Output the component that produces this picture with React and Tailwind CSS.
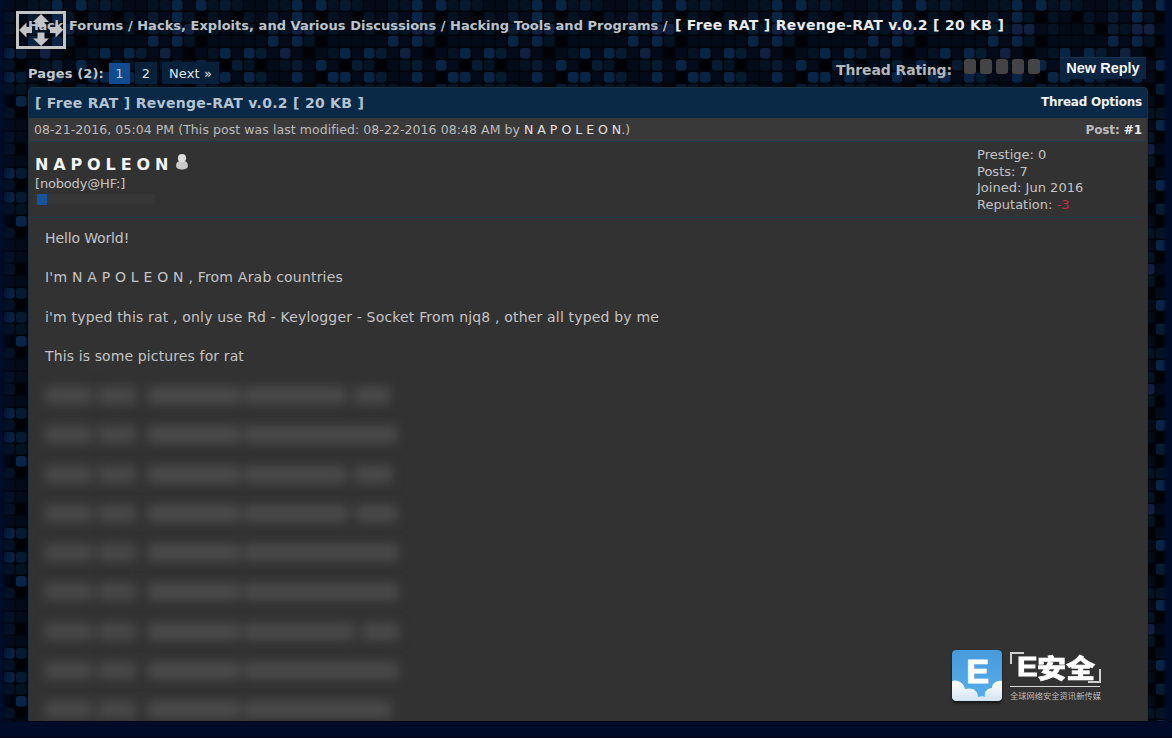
const TONES = {
  ".": "#020b17",
  "-": "#041322",
  "o": "#061b30",
  "#": "#092545",
  "p": "#11203f",
  "x": "#010205",
};

// One 10 x 10 block of the mosaic, repeated over the page
const MOSAIC = [
  "..--#.#-o-",
  "-.o.#-x-.x",
  "-xo-pp.-..",
  "..#.#-x...",
  "#o.p.x.-#.",
  "-x.-o.#.xo",
  "#o..#.x##.",
  "---..xo-.-",
  "x#.-o.x.#.",
  "-x-.#--x.-",
];

const BLURRED = [
  [345, 100, 30],
  [352, 140, 0],
  [347, 100, 36],
  [352, 102, 30],
  [353, 140, 0],
  [353, 140, 0],
  [354, 108, 32],
  [353, 140, 0],
  [346, 130, 0],
];

function Mosaic() {
  return (
    <svg className="absolute inset-0 h-full w-full" aria-hidden="true">
      <defs>
        <pattern id="mosaic" x="3" y="-1" width="120" height="120" patternUnits="userSpaceOnUse">
          <rect width="120" height="120" fill="#01060e" />
          {MOSAIC.map((row, r) =>
            [...row].map((t, c) => (
              <rect key={`${r}-${c}`} x={c * 12 + 1} y={r * 12 + 1} width="10.4" height="10.4" rx="2.4" fill={TONES[t]} />
            ))
          )}
        </pattern>
        <linearGradient id="edgeL" x1="0" x2="1" y1="0" y2="0">
          <stop offset="0" stopColor="#000c2e" />
          <stop offset="0.3" stopColor="#000c2a" stopOpacity="0.6" />
          <stop offset="1" stopColor="#000c2a" stopOpacity="0" />
        </linearGradient>
        <linearGradient id="edgeR" x1="1" x2="0" y1="0" y2="0">
          <stop offset="0" stopColor="#000b28" />
          <stop offset="0.4" stopColor="#000b28" stopOpacity="0.95" />
          <stop offset="0.7" stopColor="#000b28" stopOpacity="0" />
        </linearGradient>
      </defs>
      <rect width="1172" height="738" fill="url(#mosaic)" />
      <rect width="14" height="738" fill="url(#edgeL)" />
      <rect x="1158" width="14" height="738" fill="url(#edgeR)" />
    </svg>
  );
}

function MoveHandle() {
  return (
    <svg className="absolute left-4 top-[11px]" width="50" height="38" viewBox="0 0 50 38" aria-hidden="true">
      <rect x="1.5" y="1.5" width="47" height="35" fill="none" stroke="#c2c4c6" strokeWidth="3" />
      <g fill="#c2c4c6">
        <path d="M25 3 L33 11 H28.5 V16 H21.5 V11 H17 Z" />
        <path d="M25 35 L33 27.500 H28.500 V21.500 H21.500 V27.500 H17 Z" />
        <path d="M3 19 L10.500 11.500 V16 H16 V22 H10.500 V26.500 Z" />
        <path d="M47 19 L39.500 11.500 V16 H34 V22 H39.500 V26.500 Z" />
      </g>
    </svg>
  );
}

function UserIcon() {
  return (
    <svg className="ml-[6px] -mt-[4px]" width="14" height="18" viewBox="0 0 14 18" aria-hidden="true">
      <path d="M1.200 13.500 C0.800 9.500 3 7.800 7 7.800 S13.200 9.500 12.800 13.500 C12.800 17.500 1.200 17.500 1.200 13.500 Z" fill="#c9c9c9" />
      <circle cx="7" cy="5.200" r="4.100" fill="#dcdcdc" />
    </svg>
  );
}

function Watermark() {
  return (
    <div className="absolute left-[952px] top-[650px] flex gap-[8px]">
      <svg width="50" height="51" viewBox="0 0 50 51" className="shadow-[0_2px_3px_rgba(0,0,0,0.6)] rounded-[4px]" aria-hidden="true">
        <defs>
          <clipPath id="badge"><rect width="50" height="51" rx="4" /></clipPath>
          <linearGradient id="sky" x1="0" y1="0" x2="0" y2="1">
            <stop offset="0" stopColor="#479bdc" />
            <stop offset="1" stopColor="#58aeea" />
          </linearGradient>
          <linearGradient id="cloud" x1="0" y1="0" x2="0" y2="1">
            <stop offset="0" stopColor="#ffffff" />
            <stop offset="1" stopColor="#d3e4f1" />
          </linearGradient>
        </defs>
        <g clipPath="url(#badge)">
          <rect width="50" height="51" fill="url(#sky)" />
          <path d="M0 31 C6 29 12 33 13 39 C20 37 26 40 26 47 C29 46 32 46 33 47 C32 42 35 38 40 38 C40 33 45 30 50 31 V51 H0 Z" fill="url(#cloud)" />
        </g>
        <text x="25.500" y="33" textAnchor="middle" fontFamily="Liberation Sans" fontWeight="700" fontSize="34" fill="#fff" stroke="#fff" strokeWidth="1">E</text>
      </svg>
      <div className="relative flex w-[91px] flex-col text-white">
        <div className="flex h-[34px] items-center whitespace-nowrap pl-[7px] font-['Noto_Sans_CJK_SC',sans-serif] font-black">
          <span className="w-[20px] origin-left scale-x-110 font-['Liberation_Sans',sans-serif] text-[28px] leading-[34px] [-webkit-text-stroke:1px_white]">E</span>
          <span className="origin-left scale-x-[1.12] text-[26px] leading-[34px] [-webkit-text-stroke:0.6px_white]">安全</span>
        </div>
        <span className="absolute left-0 top-[2px] h-[12px] w-[14px] border-l-2 border-t-2 border-[#d0d0d0]" />
        <span className="absolute right-0 top-[19px] h-[14px] w-[13px] border-b-2 border-r-2 border-[#d0d0d0]" />
        <div className="mt-[2px] h-px w-[90px] bg-[#d8d8d8]" />
        <div className="mt-[2px] whitespace-nowrap font-['Noto_Sans_CJK_SC',sans-serif] text-[8.27px] leading-[13px] text-[#bdbdbd]">全球网络安全资讯新传媒</div>
      </div>
    </div>
  );
}

function BlurLine({ width, tail, dot }) {
  return (
    <div className="flex h-[39.25px] items-center blur-[5.5px]">
      <span className="h-[17px] w-[47px] bg-[#4a494a]" />
      <span className="ml-[6px] h-[17px] w-[38px] bg-[#4a494a]" />
      <span className="ml-[12px] h-[17px] w-[92px] bg-[#4c4b4c]" />
      <span className="ml-[4px] h-[17px] bg-[#4b4a4b]" style={{ width: dot ? tail + 2 : width - 199 }} />
      {dot > 0 && <span className="ml-[8px] h-[17px] bg-[#4b4a4b]" style={{ width: width - 209 - tail }} />}
    </div>
  );
}

export default function App() {
  return (
    <div className="relative flex h-[738px] w-[1172px] flex-col overflow-hidden bg-[#01060e] font-['DejaVu_Sans','Noto_Sans_CJK_SC',sans-serif] text-[#c4c4c4]">
      <Mosaic />

      <div className="relative flex h-[50px] items-center whitespace-pre pl-7 pt-px text-[13px] font-bold tracking-[0.02px] text-[#bcc3ca]">
        <span className="w-[41px] tracking-[-0.3px]">Hack </span>
        <span className="w-[606px]">Forums / Hacks, Exploits, and Various Discussions / Hacking Tools and Programs / </span>
        <span className="text-[14px] tracking-[0.29px] text-[#e8ecef]">[ Free RAT ] Revenge-RAT v.0.2 [ 20 KB ]</span>
        <MoveHandle />
      </div>

      <div className="relative flex h-[37px] items-start justify-between pl-7 pr-[26px]">
        <div className="flex items-center pt-[12px] text-[13px] text-[#dfe5ea]">
          <span className="w-[81px] whitespace-nowrap pt-[2px] font-bold tracking-[0.15px] text-[#c3c7cb]">Pages (2):</span>
          <span className="flex h-[21px] w-[21px] items-center justify-center bg-[#114c91] pt-px text-[#b9cfe6]">1</span>
          <span className="ml-[5px] flex h-[22px] w-[22px] items-center justify-center bg-[#08213a] pt-px">2</span>
          <span className="ml-[5px] flex h-[22px] w-[57px] items-center justify-center bg-[#08213a] pt-px tracking-[0.1px]">Next »</span>
        </div>
        <div className="flex pt-[7px]">
          <span className="mt-[4px] w-[128px] whitespace-nowrap text-[14px] font-bold leading-[18px] tracking-[-0.11px] text-[#b4b7ba]">Thread Rating:</span>
          <div className="mt-[2px] flex gap-[4px]">
            {[0, 1, 2, 3, 4].map((i) => (
              <span key={i} className="h-[15px] w-[12px] rounded-[3px] bg-[#444445]" />
            ))}
          </div>
          <span className="ml-[20px] flex h-[22px] w-[86px] items-center justify-center whitespace-nowrap border-t border-[#15324f] bg-[#0a2442] font-['Liberation_Sans',sans-serif] text-[14.5px] font-bold text-[#f2f4f6]">New Reply</span>
        </div>
      </div>

      <main className="relative ml-7 flex h-[634px] w-[1120px] flex-col rounded-t-[5px] border-x border-t border-[#1d3240] bg-[#333233] pr-px">
        <header className="-mr-px flex h-[30px] items-center justify-between rounded-t-[4px] bg-[#092947] pl-[6px] pr-[5px] font-bold">
          <h1 className="text-[14px] tracking-[0.29px] text-[#b4c3d1]">[ Free RAT ] Revenge-RAT v.0.2 [ 20 KB ]</h1>
          <span className="-mt-[3px] text-[12px] tracking-[-0.23px] text-[#edf1f4]">Thread Options</span>
        </header>

        <div className="flex h-[24px] items-center justify-between whitespace-pre border-b border-[#1f3c44] bg-[#3a393a] pl-[5px] pr-[4px] text-[12.500px] text-[#bcbcbc]">
          <span className="pt-px tracking-[0.064px]">
            08-21-2016, 05:04 PM (This post was last modified: 08-22-2016 08:48 AM by <span className="tracking-normal text-[#e2e2e2]">N A P O L E O N</span>.)
          </span>
          <span className="text-[12px] font-bold tracking-[-0.1px]">Post: <span className="text-[#ececec]">#1</span></span>
        </div>

        <div className="flex h-[76px] justify-between border-b border-[#1f3c44] pl-[6px]">
          <div className="flex flex-col pt-[10px]">
            <div className="flex h-[23px] items-center">
              <span className="w-[134px] whitespace-nowrap pt-px text-[16px] font-bold leading-[23px] tracking-[-0.35px] text-[#f4f4f4]">N A P O L E O N</span>
              <UserIcon />
            </div>
            <span className="text-[13px] leading-[17px] tracking-[-0.17px]">[nobody@HF:]</span>
            <div className="mt-[2px] h-[10px] w-[120px] bg-[#373637] pl-[2px]">
              <div className="h-[11px] w-[10px] rounded-[1px] bg-[#1355a0]" />
            </div>
          </div>
          <div className="w-[169px] pt-[5px] text-[13px] leading-[16.700px] tracking-[0.02px]">
            <p>Prestige: 0</p>
            <p>Posts: 7</p>
            <p>Joined: Jun 2016</p>
            <p>Reputation: <span className="text-[#c02c38]">-3</span></p>
          </div>
        </div>

        <article className="flex min-h-0 flex-1 flex-col overflow-hidden pl-[16px] pt-px text-[14px] leading-[39.25px]">
          <p className="h-[39.25px] shrink-0 tracking-[-0.13px]">Hello World!</p>
          <p className="h-[39.25px] shrink-0 tracking-[0.204px]">I'm N A P O L E O N , From Arab countries</p>
          <p className="h-[39.25px] shrink-0 tracking-[0.175px]">i'm typed this rat , only use Rd - Keylogger - Socket From njq8 , other all typed by me</p>
          <p className="h-[39.25px] shrink-0 tracking-[0.123px]">This is some pictures for rat</p>
          {BLURRED.map(([w, tail, dot], i) => (
            <div key={i} className="shrink-0">
              <BlurLine width={w} tail={tail} dot={dot} />
            </div>
          ))}
        </article>
      </main>

      <footer className="relative h-[17px] border-b border-t border-b-[#01030c] border-t-[#010818] bg-[#000b29]" />
      <Watermark />
    </div>
  );
}
